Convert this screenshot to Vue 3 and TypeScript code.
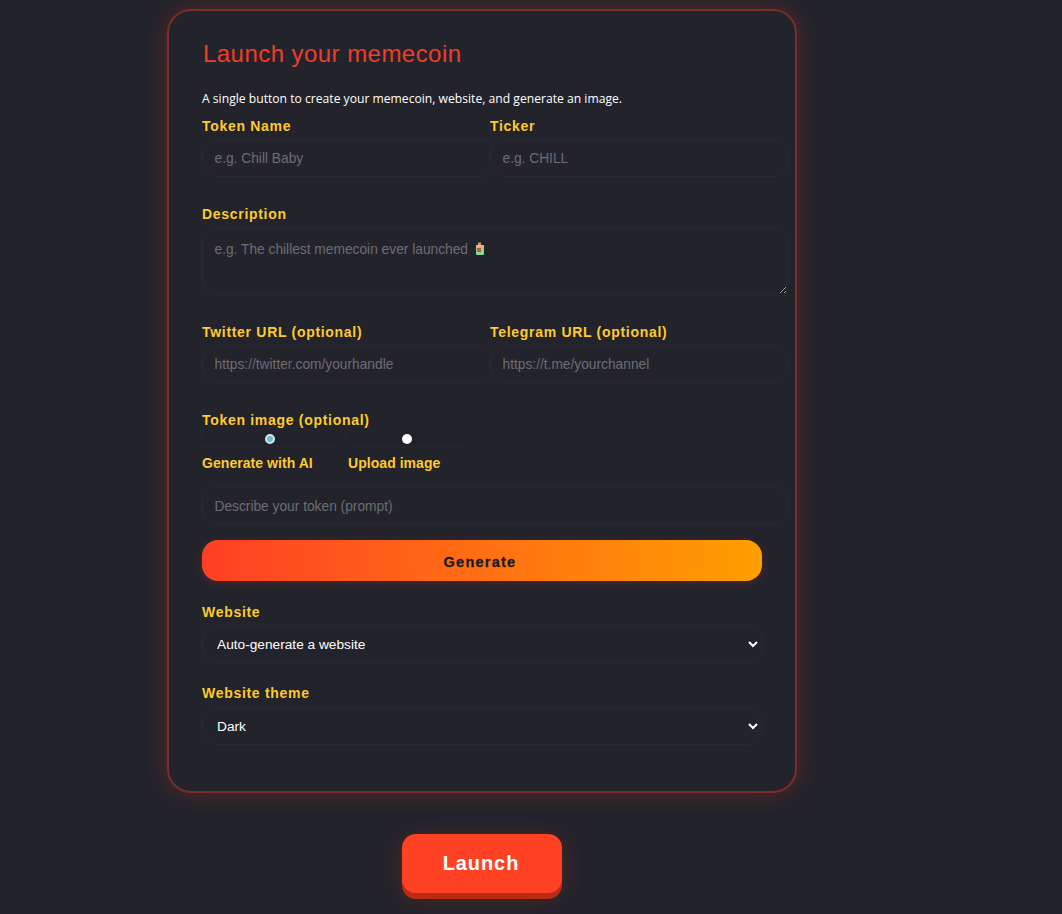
<template>
  <div class="page">
    <form class="card" @submit.prevent>
      <h1 class="title">Launch your memecoin</h1>
      <p class="subtitle">A single button to create your memecoin, website, and generate an image.</p>

      <div class="row">
        <div class="field first">
          <label class="label">Token Name</label>
          <input v-model="name" class="input" type="text" placeholder="e.g. Chill Baby" />
        </div>
        <div class="field second">
          <label class="label">Ticker</label>
          <input v-model="ticker" class="input" type="text" placeholder="e.g. CHILL" />
        </div>
      </div>

      <div class="desc">
        <label class="label">Description</label>
        <div class="desc-box">
          <textarea v-model="description" class="input area" placeholder="e.g. The chillest memecoin ever launched"></textarea>
          <svg v-if="!description" class="juice" viewBox="0 0 12 14" width="12" height="14">
            <rect x="4" y="0.5" width="3" height="3" fill="#c9a25a" />
            <rect x="2" y="3" width="8" height="10" rx="1" fill="#86d98a" />
            <rect x="2" y="3" width="8" height="2" fill="#d8c66a" />
            <rect x="3" y="6" width="4" height="4" fill="#d8436a" />
          </svg>
        </div>
      </div>

      <div class="row socials">
        <div class="field first">
          <label class="label">Twitter URL (optional)</label>
          <input v-model="twitter" class="input" type="text" placeholder="https://twitter.com/yourhandle" />
        </div>
        <div class="field second">
          <label class="label">Telegram URL (optional)</label>
          <input v-model="telegram" class="input" type="text" placeholder="https://t.me/yourchannel" />
        </div>
      </div>

      <div class="image-block">
        <label class="label image-label">Token image (optional)</label>
        <div class="radios">
          <label class="radio ai">
            <span class="track"><input v-model="imageMode" type="radio" value="ai" /></span>
            <span>Generate with AI</span>
          </label>
          <label class="radio upload">
            <span class="track"><input v-model="imageMode" type="radio" value="upload" /></span>
            <span>Upload image</span>
          </label>
        </div>
        <input v-model="prompt" class="input prompt" type="text" placeholder="Describe your token (prompt)" />
      </div>

      <button class="generate" type="button">Generate</button>

      <label class="label select-label">Website</label>
      <select v-model="website" class="select">
        <option>Auto-generate a website</option>
        <option>Use my own website</option>
      </select>

      <label class="label select-label theme-label">Website theme</label>
      <select v-model="theme" class="select">
        <option>Dark</option>
        <option>Light</option>
      </select>
    </form>

    <button class="launch" type="button">Launch</button>
  </div>
</template>

<script setup lang="ts">
import { ref } from 'vue'

const name = ref('')
const ticker = ref('')
const description = ref('')
const twitter = ref('')
const telegram = ref('')
const imageMode = ref<'ai' | 'upload'>('ai')
const prompt = ref('')
const website = ref('Auto-generate a website')
const theme = ref('Dark')
</script>

<style scoped>
.page {
  width: 964px;
  display: flex;
  flex-direction: column;
  align-items: center;
  padding-top: 9px;
  height: 905px;
  overflow: hidden;
  font-family: "Liberation Sans", Arial, sans-serif;
}

.card {
  box-sizing: border-box;
  width: 630px;
  height: 784px;
  flex-shrink: 0;
  padding: 0 7px 0 33px;
  background: #23232b;
  border: 2px solid #7d2c27;
  border-radius: 24px;
  box-shadow: 0 0 24px rgba(255, 64, 32, 0.22);
}

.title {
  margin: 29px 0 0 1px;
  font-size: 24px;
  line-height: 28px;
  font-weight: 400;
  letter-spacing: 0.45px;
  color: #ef3d2a;
}

.subtitle {
  margin: 22px 0 0;
  font-family: "Open Sans", sans-serif;
  font-size: 12.15px;
  line-height: 18px;
  color: #fff;
}

.label {
  display: block;
  font-size: 14px;
  line-height: 16px;
  font-weight: 700;
  letter-spacing: 0.7px;
  color: #ffca2c;
}

.row {
  display: flex;
  margin-top: 10px;
}

.field .label {
  margin-bottom: 5px;
}

.first {
  width: 288px;
  flex-shrink: 0;
}

.first .input {
  width: 293px;
}

.second {
  width: 298px;
  flex-shrink: 0;
}

.second .input {
  position: relative;
  width: 298px;
}

.input {
  box-sizing: border-box;
  display: block;
  height: 38px;
  padding: 0 11.5px;
  background: #23232b;
  border: 1px solid #292932;
  border-radius: 14px;
  outline: none;
  font-family: "Liberation Sans", Arial, sans-serif;
  font-size: 13.75px;
  color: #fff;
}

.input::placeholder {
  color: #6c6e73;
}

.desc {
  margin-top: 29px;
}

.desc .label {
  margin-bottom: 6px;
}

.desc-box {
  position: relative;
  width: 586px;
}

.area {
  width: 586px;
  height: 67px;
  padding: 13px 11.5px;
  resize: both;
  line-height: 16px;
}

.juice {
  position: absolute;
  left: 272px;
  top: 14px;
}

.socials {
  margin-top: 29px;
}

.image-block {
  margin-top: 29px;
}

.image-label {
  margin-bottom: 3px;
}

.radios {
  display: flex;
  gap: 10px;
}

.radio {
  display: flex;
  flex-direction: column;
  font-size: 14px;
  line-height: 16px;
  font-weight: 700;
  letter-spacing: 0.05px;
  color: #ffca2c;
}

.track {
  display: flex;
  align-items: center;
  justify-content: center;
  width: 136px;
  height: 13px;
  margin: 1px 0 10px;
  border-radius: 6px;
  background: #212129;
}

.radio.upload .track {
  width: 118px;
}

.track input {
  appearance: none;
  box-sizing: border-box;
  width: 10px;
  height: 10px;
  margin: 0;
  border-radius: 50%;
  background: #fff;
}

.track input:checked {
  background: #6fb9d0;
  border: 2px solid #cfe6ec;
}

.prompt {
  width: 586px;
  height: 39px;
  margin-top: 15px;
  padding-bottom: 0;
  padding-top: 1px;
}

.generate {
  display: block;
  width: 560px;
  height: 41px;
  margin-top: 15px;
  padding: 2px 10px 0 6px;
  border: none;
  border-radius: 16px;
  background: linear-gradient(90deg, #ff3f25, #ff9f00);
  box-shadow: 0 2px 10px rgba(255, 64, 32, 0.18);
  font-family: "Liberation Sans", Arial, sans-serif;
  font-size: 14.5px;
  font-weight: 700;
  letter-spacing: 1.25px;
  -webkit-text-stroke: 0.3px #1b1b20;
  color: #1b1b20;
}

.select-label {
  margin-top: 23px;
  margin-bottom: 5px;
}

.theme-label {
  margin-top: 22px;
  margin-bottom: 6px;
}

.select {
  box-sizing: border-box;
  display: block;
  width: 560px;
  height: 38px;
  padding: 0 10px;
  background: #23232b;
  border: 1px solid #292932;
  border-radius: 14px;
  outline: none;
  font-family: "Liberation Sans", Arial, sans-serif;
  font-size: 13.7px;
  color: #fff;
}

.launch {
  flex-shrink: 0;
  width: 160px;
  height: 59px;
  margin-top: 41px;
  padding: 0 8px 0 6px;
  border: none;
  border-radius: 14px;
  background: #ff4224;
  box-shadow: 0 6px 0 #b92c12, 0 4px 24px rgba(255, 64, 32, 0.2);
  font-family: "Liberation Sans", Arial, sans-serif;
  font-size: 20px;
  font-weight: 700;
  letter-spacing: 0.9px;
  color: #fff;
}
</style>

<style>
html,
body {
  background: #23232b;
}
</style>
